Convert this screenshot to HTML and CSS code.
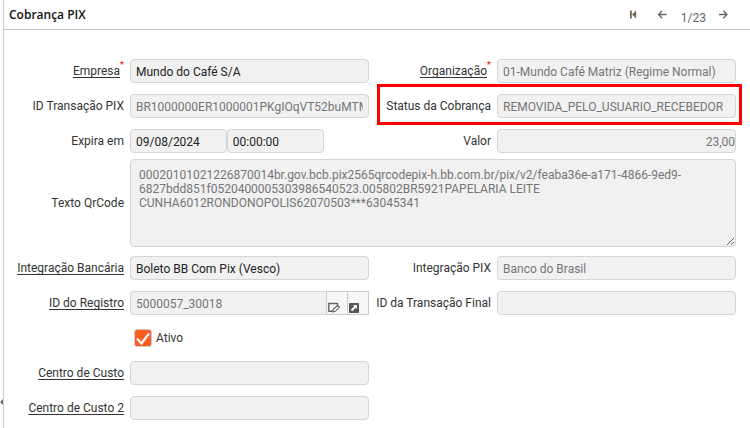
FILE: index.html
```html
<!DOCTYPE html>
<html lang="pt-BR">
<head>
<meta charset="utf-8">
<meta name="viewport" content="width=device-width, initial-scale=1">
<title>Cobrança PIX</title>
<link rel="stylesheet" href="styles.css">
</head>
<body>
<main class="panel">
  <header class="bar">
    <h1 class="title">Cobrança PIX</h1>
    <nav class="pager" aria-label="Registros">
      <button class="nav" type="button" aria-label="Primeiro"><svg width="8" height="9" viewBox="0 0 8 9"><path d="M1 0.5h1.8v8H1zM7.2 0.5v8L3 4.5z" fill="#78695a"/></svg></button>
      <button class="nav" type="button" aria-label="Anterior"><svg width="10" height="9" viewBox="0 0 10 9"><path d="M9.5 4.5H1.5M5.2 0.8L1.5 4.5l3.7 3.7" fill="none" stroke="#666" stroke-width="1.3"/></svg></button>
      <span class="count">1/23</span>
      <button class="nav" type="button" aria-label="Próximo"><svg width="10" height="9" viewBox="0 0 10 9"><path d="M1 4.5h8M5.3 0.8L9 4.5 5.3 8.2" fill="none" stroke="#666" stroke-width="1.3"/></svg></button>
    </nav>
  </header>
  <form class="form">
    <div class="field"><label class="label required" for="empresa"><span class="linked">Empresa</span></label><input class="input strong" id="empresa" value="Mundo do Café S/A" readonly></div>
    <div class="field"><label class="label required" for="org"><span class="linked">Organização</span></label><input class="input" id="org" value="01-Mundo Café Matriz (Regime Normal)" readonly></div>

    <div class="field"><label class="label" for="transacao">ID Transação PIX</label><input class="input" id="transacao" value="BR1000000ER1000001PKgIOqVT52buMTM0" readonly></div>
    <div class="field highlighted"><label class="label" for="status">Status da Cobrança</label><input class="input" id="status" value="REMOVIDA_PELO_USUARIO_RECEBEDOR" readonly></div>

    <div class="field"><label class="label" for="data">Expira em</label><div class="datetime"><input class="input strong" id="data" value="09/08/2024" readonly><input class="input strong" aria-label="Hora" value="00:00:00" readonly></div></div>
    <div class="field"><label class="label" for="valor">Valor</label><input class="input amount" id="valor" value="23,00" readonly></div>

    <div class="field wide"><label class="label" for="qr">Texto QrCode</label><textarea class="input area" id="qr" readonly>00020101021226870014br.gov.bcb.pix2565qrcodepix-h.bb.com.br/pix/v2/feaba36e-a171-4866-9ed9-6827bdd851f0520400005303986540523.005802BR5921PAPELARIA LEITE CUNHA6012RONDONOPOLIS62070503***63045341</textarea></div>

    <div class="field"><label class="label" for="banco"><span class="linked">Integração Bancária</span></label><input class="input strong" id="banco" value="Boleto BB Com Pix (Vesco)" readonly></div>
    <div class="field"><label class="label" for="pix">Integração PIX</label><input class="input" id="pix" value="Banco do Brasil" readonly></div>

    <div class="field"><label class="label" for="registro"><span class="linked">ID do Registro</span></label><div class="lookup"><input class="input" id="registro" value="5000057_30018" readonly><button class="tool" type="button" aria-label="Editar"><svg width="12" height="11" viewBox="0 0 12 11"><path d="M5 9.3H0.8V1.5h8.7v1.5" fill="none" stroke="#666" stroke-width="1.4"/><path d="M4.8 9.9l0.6-2.6 4-4 2 2-4 4z" fill="#fff" stroke="#666" stroke-width="1.2"/></svg></button><button class="tool" type="button" aria-label="Abrir"><svg width="10" height="10" viewBox="0 0 10 10"><rect width="10" height="10" rx="1" fill="#555"/><path d="M4 2h4v4L6.7 4.7 3.2 8.2 1.8 6.8 5.3 3.3z" fill="#fff"/></svg></button></div></div>
    <div class="field"><label class="label" for="final">ID da Transação Final</label><input class="input" id="final" readonly></div>

    <div class="field wide"><div class="check"><span class="tick"><input class="box" id="ativo" type="checkbox" checked><svg class="mark" viewBox="0 0 18 18"><path d="M3 9.5l4.5 5L15 4.5" fill="none" stroke="#fff" stroke-width="2.2"/></svg></span><label for="ativo">Ativo</label></div></div>

    <div class="field first"><label class="label" for="centro"><span class="linked">Centro de Custo</span></label><input class="input" id="centro" readonly></div>
    <div class="field first"><label class="label" for="centro2"><span class="linked">Centro de Custo 2</span></label><input class="input" id="centro2" readonly></div>
  </form>
  <svg class="handle" width="3" height="6" viewBox="0 0 3 6"><path d="M3 0v6L0 3z" fill="#78695a"/></svg>
</main>
</body>
</html>
```
FILE: styles.css
```css
* { box-sizing: border-box; }

body {
  margin: 0;
  background: #fff;
  color: #333;
  font: 12px/14px Roboto, "Open Sans", sans-serif;
}

.panel {
  position: relative;
  min-height: 100vh;
  margin-left: 3px;
  border-left: 1px solid #ccc;
}

.bar {
  display: flex;
  align-items: center;
  justify-content: space-between;
  height: 30px;
  padding: 0 20px 0 5px;
  border-bottom: 1px solid #c4c4c4;
}

.title {
  margin: 0;
  color: #111;
  font: 600 12px/14px "Open Sans", sans-serif;
}

.pager { display: flex; align-items: center; }

.nav {
  display: flex;
  align-items: center;
  justify-content: center;
  width: 14px;
  height: 20px;
  margin-left: 10px;
  padding: 0;
  border: 0;
  background: none;
}

.nav:first-child { margin-right: 5px; }
.count { margin-left: 12px; padding-top: 6px; color: #666; }

.form {
  display: grid;
  grid-template-columns: 120px 1fr 116px 1fr;
  column-gap: 6px;
  padding: 24px 14px 0 0;
}

.field {
  position: relative;
  display: grid;
  grid-template-columns: subgrid;
  grid-column: span 2;
  align-items: center;
  min-height: 35px;
  padding: 5px 0 6px;
}

.first { grid-column: 1 / span 2; }

.wide { grid-column: 1 / -1; }

.highlighted::after {
  content: "";
  position: absolute;
  inset: -5px -6px -1px 2px;
  border: 3px solid #f00;
  pointer-events: none;
}

.label { text-align: right; white-space: nowrap; }

.linked {
  text-decoration: underline;
  text-decoration-skip-ink: none;
  text-underline-offset: 2px;
}

.required { position: relative; padding-right: 4px; }

.required::after {
  content: "*";
  position: absolute;
  top: -6px;
  right: 0;
  color: #f00;
  font-size: 9px;
}

.input {
  width: 100%;
  min-width: 0;
  height: 24px;
  padding: 1px 5px 0;
  border: 1px solid #d5d5d5;
  border-radius: 4px;
  outline: 0;
  background: #f1f1f1;
  color: #757575;
  font: inherit;
}

.strong { color: #222; }
.amount { padding-right: 0; text-align: right; }

.datetime {
  display: grid;
  grid-template-columns: 1fr 1fr;
  width: 81%;
}

.wide:has(.area) { padding: 0 0 4px; }

.area {
  display: block;
  grid-column: 2 / -1;
  height: 88px;
  padding: 8px;
  resize: both;
}

.lookup { display: flex; }
.lookup .input { flex: 1; border-right: 0; border-radius: 4px 0 0 4px; }

.tool {
  display: flex;
  align-items: flex-end;
  width: 22px;
  height: 24px;
  padding: 0 0 1px 1px;
  border: 1px solid #ccc;
  background: #f7f7f7;
}

.tool + .tool { width: 21px; border-left: 0; }

.check {
  grid-column: 2;
  display: flex;
  align-items: center;
  gap: 4px;
  padding-left: 4px;
}

.tick { position: relative; width: 18px; height: 18px; }

.box {
  appearance: none;
  display: block;
  width: 18px;
  height: 18px;
  margin: 0;
  border: 1px solid #ccc;
  border-radius: 3px;
}

.box:checked { background: #ff5a1f; }

.mark {
  position: absolute;
  inset: 0;
  pointer-events: none;
}

.box:not(:checked) + .mark { display: none; }

.handle { position: absolute; top: 399px; left: -4px; }
```
